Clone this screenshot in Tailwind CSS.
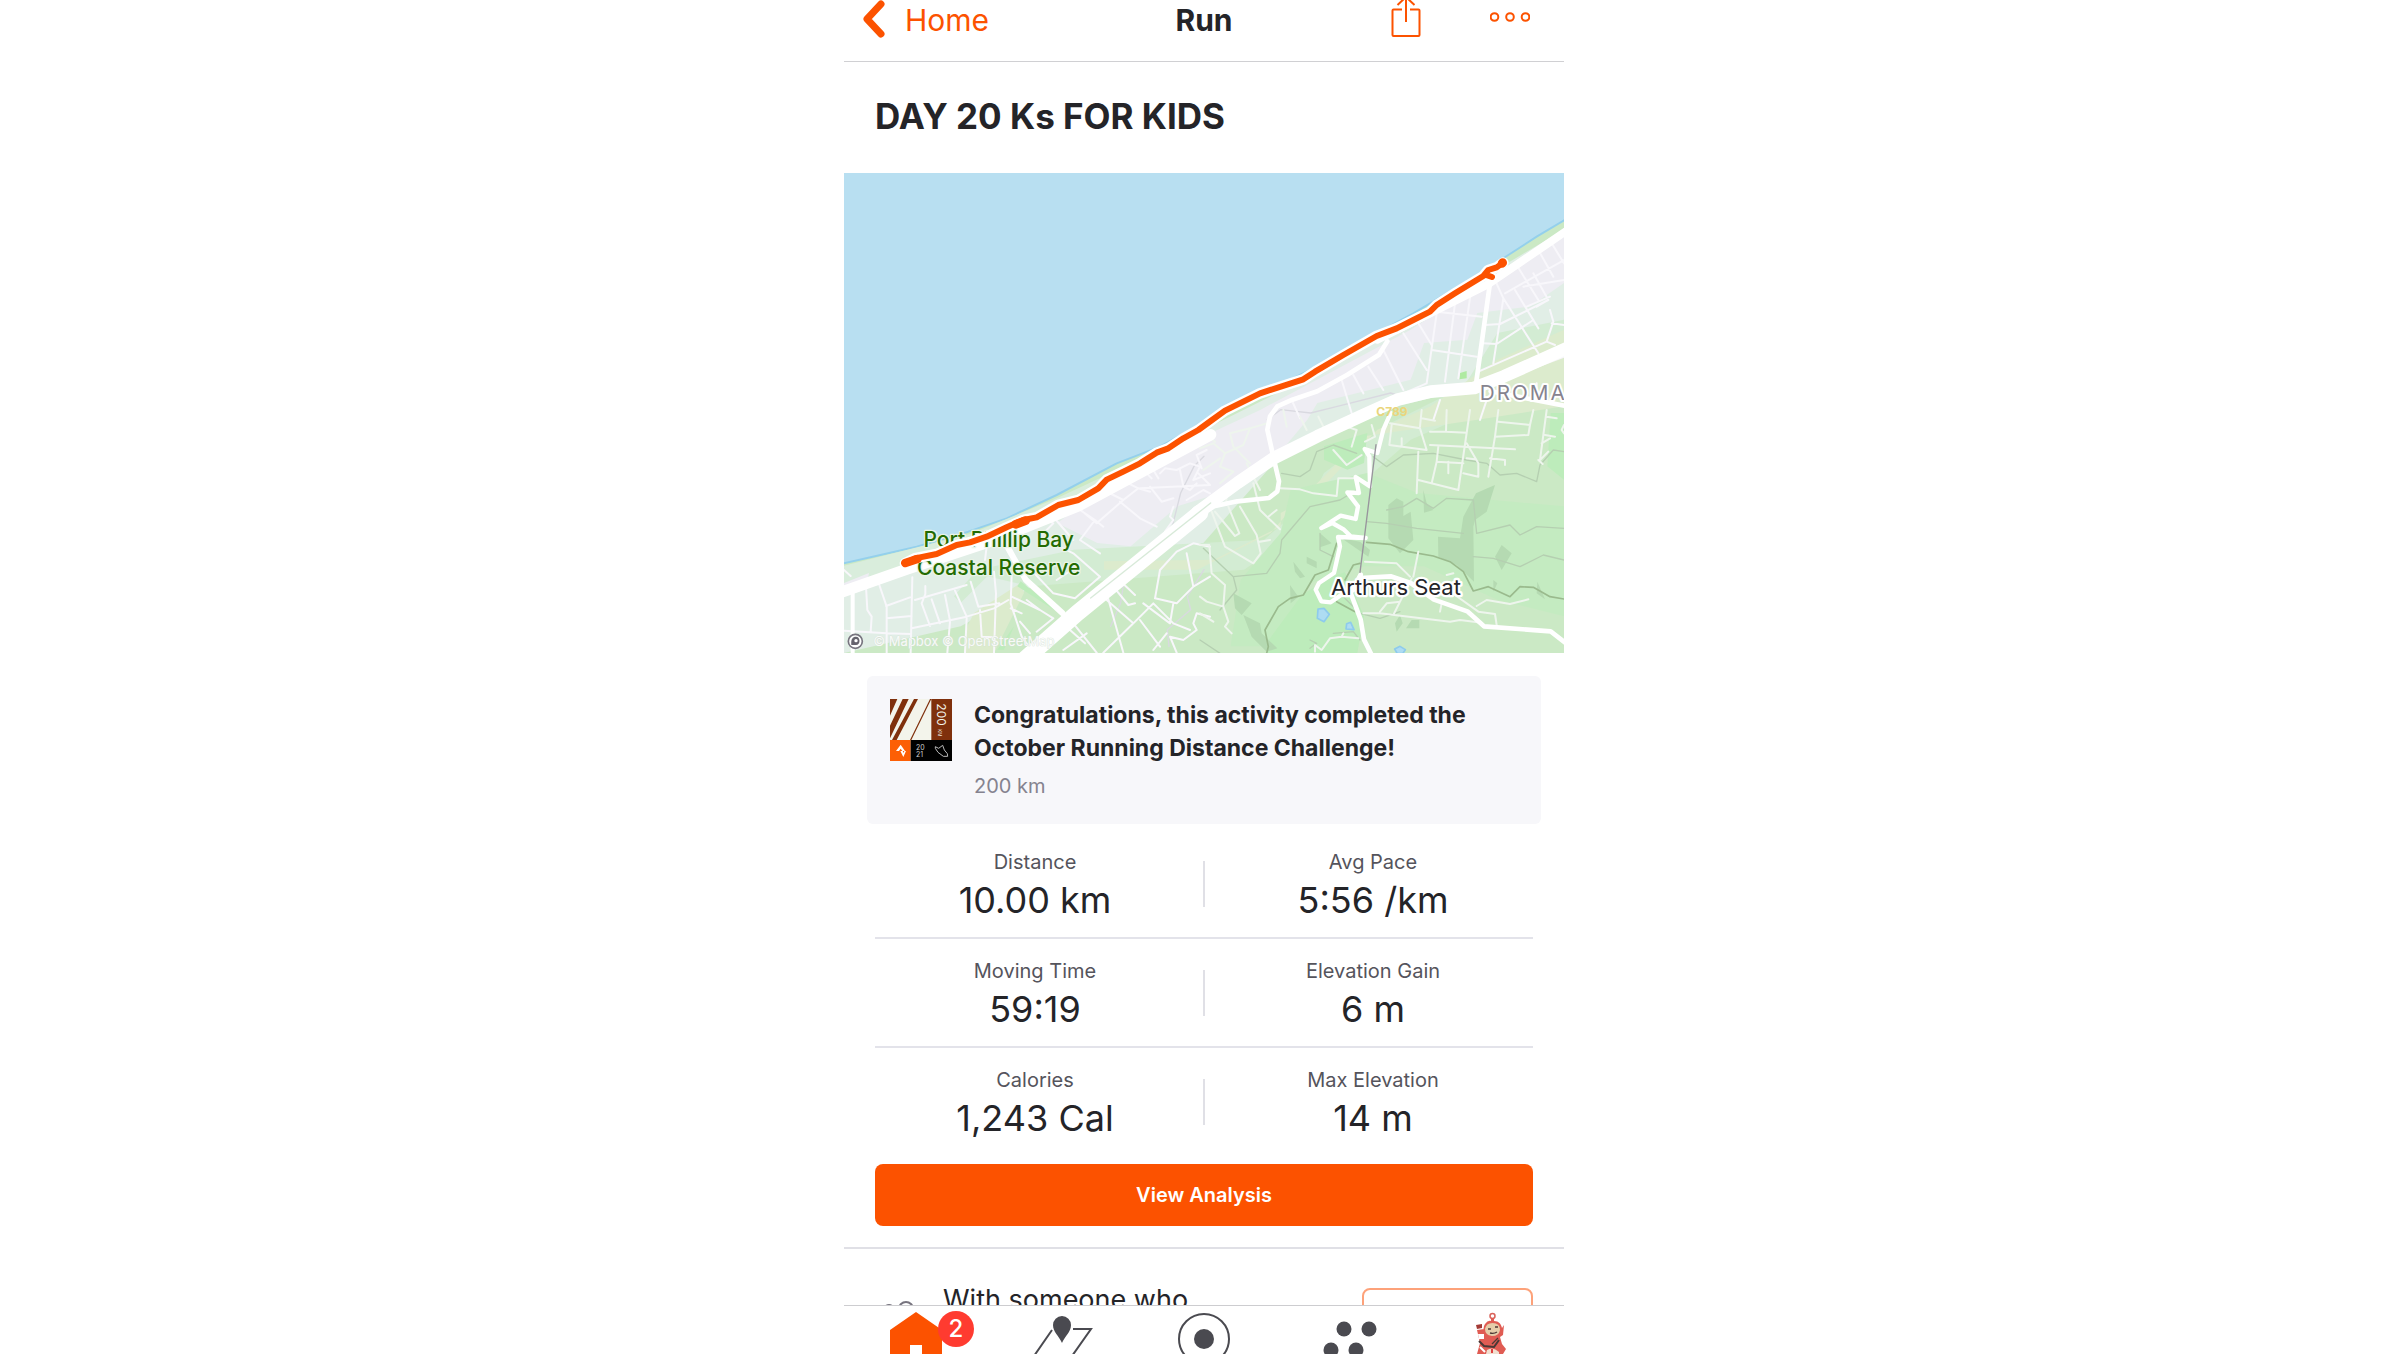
<!DOCTYPE html>
<html lang="en">
<head>
  <meta charset="UTF-8" />
  <meta name="viewport" content="width=device-width, initial-scale=1.0" />
  <title>Run</title>
  <script src="https://cdn.jsdelivr.net/npm/@tailwindcss/browser@4"></script>
</head>
<body class="bg-white text-[#242428] font-['Inter',sans-serif]">
  <div class="mx-auto flex h-screen w-full max-w-[720px] flex-col overflow-hidden">

    <header class="grid shrink-0 grid-cols-3 border-b border-[#d0d0d3] pb-[21px]">
      <a href="#" class="flex h-10 items-center gap-5 pl-[17px] text-[30px] text-[#fc5200]">
        <svg class="h-10 w-6" viewBox="0 0 24 40" fill="none" stroke="currentColor" stroke-width="7" stroke-linecap="round" stroke-linejoin="round"><path d="M20 4L6 19L20 34" /></svg>
        Home
      </a>
      <h1 class="flex h-10 items-center justify-center text-[30px] font-bold">Run</h1>
      <div class="flex h-10 items-center justify-end gap-[68px] pr-[34px] text-[#fc5200]">
        <button type="button" aria-label="Share">
          <svg class="h-10 w-8" viewBox="0 0 32 40" fill="none" stroke="currentColor" stroke-width="2"><path d="M12 9.500H3.500Q2.500 9.500 2.500 10.500V35Q2.500 36 3.500 36H28.500Q29.500 36 29.500 35V10.500Q29.500 9.500 28.500 9.500H20M16 22V-2M7.500 5L16-3L24.500 5" /></svg>
        </button>
        <button type="button" aria-label="More">
          <svg class="h-10 w-10" viewBox="0 0 40 40" fill="none" stroke="currentColor" stroke-width="2"><circle cx="4.500" cy="17" r="3.800" /><circle cx="20" cy="17" r="3.800" /><circle cx="35.500" cy="17" r="3.800" /></svg>
        </button>
      </div>
    </header>

    <main class="min-h-0 flex-1 overflow-hidden">
      <h2 class="px-[31px] pt-[34px] pb-[37px] text-[35px] leading-10 font-bold">DAY 20 Ks FOR KIDS</h2>

      <!-- map -->
      <svg class="block aspect-[3/2] w-full" viewBox="0 0 2160 1440" fill="none" stroke-linejoin="round" stroke-linecap="round" font-family="Inter, sans-serif">
        <rect width="2160" height="1440" fill="#b8dff1" />
        <path fill="#cbe9c5" stroke="#94d0ec" stroke-width="6" d="M-10 1173L218 1121L373 1076L488 1036L638 966L818 871L948 821L1100 738L1400 590L1600 480L1708 421L1868 326L1993 246L2078 191L2170 136V1450H-10Z" />
        <!-- ground tints -->
        <path fill="#e1eee6" d="M0 1200L430 1095L1100 760L1500 560L2160 170V440L1900 640L1500 740L1290 870L1060 1130L700 1160L480 1290L350 1360L0 1440Z" />
        <path fill="#d9eddc" d="M0 1178L380 1082L640 975L950 830L1100 760L640 1010L340 1130L0 1250Z" />
        <path fill="#d3ecd3" d="M690 1130L1260 1100L1400 980L1440 900L1640 750L1860 640L1960 480L2160 440V600L1700 800L1450 1020L1200 1190L560 1240L430 1210L350 1290L330 1270L400 1190Z" />
        <path fill="#dcebcd" d="M780 1165L1110 1160L1310 1060V1020L1420 960L1600 770L1760 700L1960 560L2160 470V700L1900 740L1560 790L1340 1010L1280 1080L1060 1190L780 1190ZM370 1360L390 1320L530 1230L540 1260L450 1440H360Z" />
        <path fill="#eeedf3" d="M640 1050L800 935L1100 780L1250 710L1700 470L1930 320L2160 180V330L2060 400L1900 420L1870 500L1740 510L1700 620L1420 690L1390 740L1290 860L1130 960L1000 1000L860 1120L760 1110Z" />
        <path fill="#eeedf3" d="M0 1230L75 1200L70 1225L0 1260Z" />
        <path fill="#bdecbb" d="M1440 820L1570 780L1560 870L1510 890L1440 860ZM1280 1320L1500 1190L1560 1330L1540 1440H1270ZM530 1225L660 1330L520 1240ZM460 1430L510 1360L480 1430ZM2120 720H2160V920L2110 880Z" />
        <path fill="#c4ebc1" d="M1340 950L1570 900L1720 960L2160 1000V1330L1960 1280L1740 1180L1560 1180L1400 1230L1260 1420L1160 1420L1190 1220L1310 1080Z" />
        <path fill="#afeaa2" d="M1848 600L1868 594V616L1846 619Z" />
        <!-- hill shading -->
        <g fill="#b5dab2" transform="translate(1068 711)">
          <path d="M590 265L610 275V318L632 305L640 390L600 430L565 385V285ZM670 240L680 280L700 300L672 308ZM862 235L885 225L860 305L825 330L820 350L822 515L770 465L715 440L714 380L780 385L790 320L828 250ZM905 405L935 430L905 480L885 440ZM425 385L480 395L510 420L505 440ZM280 455L315 500L300 505L285 485ZM360 370L395 400L360 412ZM100 550L155 580L125 615L105 595ZM130 615L180 640L185 670L232 715L200 725L155 680ZM270 525L295 560L272 580ZM585 640L600 615L608 640L590 665ZM635 630H658V655H618ZM880 510L892 520L880 545ZM1012 515L1035 568L1010 550ZM320 440L350 455L350 475L320 460Z" />
        </g>
        <!-- contour lines -->
        <g stroke="#b5cfb1" stroke-width="4" transform="translate(1068 711)">
          <path d="M245 190L300 200L330 180L350 125L400 105L470 130M520 140L560 170L610 135L700 130L800 150L860 160L900 195L950 190L1010 215L1020 165L1060 120L1092 125M10 415L100 500L200 490L240 430L245 390L330 290L420 270L470 240M560 300L610 290L650 265L700 295L740 265L820 270L830 370L930 345L960 375L1010 350L1092 355M500 335L560 340L650 355L790 370M820 440L880 445L960 470L1030 435L1092 450M360 370V420L400 440M100 500L110 540L60 600M0 690L60 730M430 560L480 610L540 625L600 605M330 690L350 700L330 715M400 670L460 665L480 690" />
        </g>
        <g stroke="#9aba8d" stroke-width="5" transform="translate(1068 711)">
          <path d="M200 730L205 710L195 660L235 590L270 565L310 555L345 495L385 480L410 400M435 510L460 465L480 460M500 397L570 403L625 425L700 438L750 455L790 485L820 543L865 530L930 560L960 530L1000 532L1050 560L1092 567M410 575L465 605" />
        </g>
        <path stroke="#d9d9e0" stroke-width="4" d="M1080 850L1050 880L1010 960L985 1060L970 1130M840 1225L830 1290L800 1360M1080 1190L1030 1270L1040 1310L970 1370L975 1420M1270 740L1310 710L1400 720L1480 700L1640 660L1700 680" />
        <!-- ponds -->
        <path fill="#aedcf2" stroke="#8ecbec" stroke-width="5" d="M1422 1308L1440 1306L1456 1324L1440 1346L1420 1336ZM1508 1352L1520 1348L1530 1370L1506 1368ZM1652 1428L1668 1420L1684 1430L1676 1442H1660Z" />

        <!-- west side streets -->
        <g stroke="#f8f7fb" stroke-width="6" transform="translate(-12 -9)">
          <path d="M12 1200L32 1218M78 1250L82 1320L95 1340L92 1385M118 1245L140 1310V1448M12 1382L140 1390L212 1392M140 1345L215 1338M138 1308L210 1282M217 1222L212 1448M256 1248V1272L245 1300L270 1368M215 1375L380 1340L462 1315L505 1290M275 1288L300 1360M315 1275L330 1352M345 1262L380 1340M392 1235L415 1310L478 1300M225 1290L380 1245M462 1205L468 1270L462 1448M330 1355L322 1448M380 1345L375 1448M420 1320L425 1400L462 1402M515 1215L512 1300L545 1400L580 1448M515 1280L600 1320L640 1345L590 1385M560 1290L600 1320M512 1315L545 1330M570 1390L540 1355M440 1130L435 1170M600 1100L640 1060L600 1040M600 1100L700 1150L780 1220L705 1285L640 1270L560 1185M635 1035L700 1110M650 1230L710 1190M690 1000L765 1050L720 1110L780 1150M710 1010L770 1060L850 990L790 960M765 1050L790 1070M840 995L900 1045L950 1070M825 920L895 955L850 990M900 955L1110 945L1075 910M895 955L930 965M930 950L965 995L1000 985M900 890L935 925M940 900L955 925M960 910L975 895L1010 900L1050 880L1080 890L1060 930L1110 910M1020 900L1030 950L1050 960L1070 940M1100 840L1070 855L1085 895M1040 990L1090 960L1110 970M1000 1010L990 1040L1000 1050L975 1085" />
          <path d="M800 1270L850 1448M820 1250L865 1305L885 1300M848 1240L885 1275M800 1290L880 1360L940 1300L1000 1360L1050 1380M945 1285L960 1200L1010 1145L1060 1120L1110 1130M945 1285L1010 1300L1060 1250L1110 1220M1040 1150L1060 1250M900 1350L960 1430M880 1360L790 1448M700 1360L770 1448M690 1380L735 1420M670 1440L740 1390M1000 1300L990 1360L910 1300M1110 1340L1070 1330L1060 1360L1070 1380L1030 1410L990 1400L1010 1448M980 1390L940 1440" />
        </g>
        <!-- north-east streets -->
        <g stroke="#f8f7fb" stroke-width="6" transform="translate(1068 -9)">
          <path d="M425 630L455 730M460 615L490 670M505 590L550 660M550 540L610 660M610 490L680 600M655 460L695 525M275 690L300 745M710 430L680 640L610 670M765 400L735 635M812 370L775 625M710 425L845 440M695 540L830 560M885 330L910 385L1015 550M910 385L880 580M950 285L1015 390M915 370L1092 270M1015 240L1060 320M1055 220L1092 280M1000 310L1045 390L1010 410M970 350L1092 330M945 360L1015 475M980 410L1050 380M855 465L900 462L1045 390M850 520L890 522L1000 450M835 605L1040 515L1065 525M1050 420L1060 455L1040 515M1055 460L1092 465M985 600L1092 560M1010 640V670M720 690L700 750M860 690L840 750" />
        </g>
        <!-- south-east streets -->
        <g stroke="#eef5ed" stroke-width="6" transform="translate(1068 711)">
          <path d="M0 115L40 100L75 130L60 170L100 185M10 180L60 145M75 130L130 105L150 55L90 70L100 110L150 160M150 55L200 40M250 0L260 50M300 20L320 60M355 20L370 50M45 95L15 75M100 185L60 220M140 160L180 240M240 235L300 238L340 250L410 258L415 205L460 205M35 305L75 410L160 460L182 430L170 375L120 290M45 305L105 378L118 370L85 290M80 255L78 285M160 220L180 300L240 358M205 320L230 300M180 395L210 390M0 405L28 405L35 490L75 525L70 590L20 575L0 560M70 590L85 635L75 650L95 670M0 610L40 635" />
          <path d="M570 40L660 55L680 120L568 105L575 45M605 85V108M665 0L660 50M665 25L705 32M740 0L738 65L800 68M690 65H740M810 0L775 240L655 210M655 125L650 250M715 110L710 155L695 220M710 155L790 160M745 155V190M690 105L945 118M800 100L835 160V200L790 190M895 0L885 80L865 200M895 35L990 45L985 75L885 80M1000 0L990 45M1040 0L1020 150L1045 125M1040 20L1070 25M1035 75L1065 80M1025 100L1050 85M1015 150L1028 162M870 145L915 150V165M800 145L825 148M1092 45L1085 60L1092 70M440 50L470 60L455 110M515 45L525 80L495 95M400 120L440 165L485 135" />
          <path d="M495 455L590 460L630 500M655 425L640 500M635 505L580 615M490 610H540L750 635L780 630L845 638M540 605L560 580L600 575M720 605L725 580M740 495L760 490M765 555L835 605L885 612L890 645M830 588L860 570L930 582L985 568M345 725V705L365 720L390 685L425 680L475 685M425 680L430 670" />
        </g>
        <!-- main roads -->
        <g stroke="#fff">
          <path stroke-width="34" d="M-20 1262L190 1188L430 1108L700 1000L1100 785" />
          <path stroke-width="12" d="M26 1250V1440" />
          <path stroke-width="18" d="M484 1110L545 1220L655 1320" />
          <path stroke-width="50" d="M530 1470L700 1320L1068 1020" />
          <path stroke-width="14" d="M700 1320L760 1255L1110 985" />
          <path stroke-width="38" d="M1060 1018L1180 930L1290 855L1420 790L1560 725L1660 680L1760 656L1890 645L1980 610L2180 520" />
          <path stroke-width="24" d="M1600 500L1930 335L2180 165" />
          <path stroke-width="14" d="M1630 505L1605 545L1510 605L1420 655L1345 680L1300 700L1278 730L1270 770L1290 860L1305 925L1300 955L1275 975L1180 985L1110 1000L1050 1040" />
          <path stroke-width="14" d="M1938 330L1895 640M1940 655L2170 700" />
          <path stroke-width="13" d="M1640 720L1618 770L1600 840L1562 828L1576 850L1578 940L1535 912L1545 960L1510 958L1542 1000L1535 1038L1490 1028L1432 1065L1465 1050L1500 1070L1520 1090L1565 1095L1482 1092L1488 1120L1470 1200L1425 1230L1415 1250L1432 1285L1460 1288L1500 1260L1530 1250" />
          <path stroke-width="14" d="M1550 1205L1520 1260L1550 1340L1560 1400L1585 1450M1550 1215L1640 1210L1700 1230L1770 1280L1870 1315L1920 1360L2080 1372L2120 1375L2165 1410" />
        </g>
        <path stroke="#98949d" stroke-width="4" d="M1596 815L1548 1198" />
        <path stroke="#d8ead9" stroke-width="4" d="M740 1275L1100 990" />

        <g paint-order="stroke">
          <g font-size="63" font-weight="500" fill="#246b02" stroke="#e9f4e6" stroke-width="8">
            <text x="464" y="1122" text-anchor="middle">Port Phillip Bay</text>
            <text x="464" y="1205" text-anchor="middle">Coastal Reserve</text>
          </g>
          <text x="1656" y="1267" text-anchor="middle" font-size="66" fill="#242428" stroke="#fff" stroke-width="14">Arthurs Seat</text>
          <text x="1907" y="680" class="tracking-widest" font-size="62" fill="#86838f" stroke="#fff" stroke-width="12">DROMANA</text>
          <text x="1644" y="728" text-anchor="middle" font-size="36" font-weight="700" fill="#ead57c">C789</text>
        </g>

        <!-- run route -->
        <g stroke="#fff" stroke-width="32">
          <path id="route" d="M183 1171L213 1156L278 1143L338 1116L378 1108L428 1091L488 1063L538 1041L578 1033L643 996L703 981L763 946L788 920L838 896L888 871L938 839L973 826L1018 796L1063 771L1100 744L1143 713L1248 661L1378 619L1413 596L1498 546L1598 489L1658 466L1708 441L1758 416L1778 396L1833 361L1918 309L1933 291L1958 283L1978 269M1922 304L1944 312" />
        </g>
        <g stroke="#fc5200">
          <use href="#route" stroke-width="18" />
          <path stroke-width="26" d="M184 1170L220 1158M515 1054L545 1043M1974 271L1976 269" />
        </g>

        <circle cx="34" cy="1405" r="21" fill="#fff" stroke="#77747f" stroke-width="5" />
        <path fill="#66636e" d="M22 1416C20 1398 26 1391 36 1391C50 1391 50 1416 36 1416Z" />
        <circle cx="36" cy="1403" r="5" fill="#fff" />
        <text x="88" y="1419" font-size="39" fill="#f7faf7" stroke="#d5dfd6" stroke-width="2" paint-order="stroke">© Mapbox © OpenStreetMap</text>
      </svg>

      <section class="mx-[23px] mt-[23px] flex gap-[22px] rounded-md bg-[#f7f7fa] px-[23px] pt-[23px] pb-6">
        <svg class="size-[62px] shrink-0" viewBox="0 0 186 186" font-family="Inter, sans-serif">
          <rect width="186" height="186" fill="#f3f4eb" />
          <path fill="#7f300c" d="M0 0H22L0 50ZM38 0H56L0 118V80ZM72 0H84L20 123H6ZM120 0H124L64 123H60ZM124 0H186V123H124Z" />
          <path fill="#fc5f05" d="M0 123H62V186H0Z" />
          <path fill="#000" d="M62 123H186V186H62Z" />
          <path fill="#fff" d="M18 156L32 137L45 156H37L32 149L27 156ZM31 156H38L41 162L43 156H48L40 174Z" />
          <path fill="none" stroke="#bbb" stroke-width="3" d="M136 143L146 148L158 139L163 153L172 164L173 172H160L144 160L136 148Z" />
          <text transform="translate(142 13) rotate(90)" font-size="36" fill="#f3f4eb">200</text>
          <text transform="translate(144 90) rotate(90)" font-size="14" fill="#f3f4eb">KM</text>
          <text x="78" y="153" font-size="21" fill="#ccc">20</text>
          <text x="78" y="173" font-size="21" fill="#ccc">21</text>
        </svg>
        <div>
          <h3 class="text-[23px] leading-[33px] font-bold">Congratulations, this activity completed the<br />October Running Distance Challenge!</h3>
          <p class="mt-[7px] text-[20px] leading-7 text-[#85838f]">200 km</p>
        </div>
      </section>

      <div class="mx-[23px] mt-1.5 text-center">
        <div class="flex items-center pt-[18px] pb-[17px]">
          <div class="flex-1"><p class="text-[20px] leading-7 text-[#55545c]">Distance</p><p class="mt-1 text-[36px] leading-10">10.00 km</p></div>
          <div class="h-[46px] w-0.5 bg-[#e0e0e6]"></div>
          <div class="flex-1"><p class="text-[20px] leading-7 text-[#55545c]">Avg Pace</p><p class="mt-1 text-[36px] leading-10">5:56 /km</p></div>
        </div>
        <hr class="mx-2 border-t-2 border-[#e3e3ea]" />
        <div class="flex items-center pt-[18px] pb-[17px]">
          <div class="flex-1"><p class="text-[20px] leading-7 text-[#55545c]">Moving Time</p><p class="mt-1 text-[36px] leading-10">59:19</p></div>
          <div class="h-[46px] w-0.5 bg-[#e0e0e6]"></div>
          <div class="flex-1"><p class="text-[20px] leading-7 text-[#55545c]">Elevation Gain</p><p class="mt-1 text-[36px] leading-10">6 m</p></div>
        </div>
        <hr class="mx-2 border-t-2 border-[#e3e3ea]" />
        <div class="flex items-center pt-[18px] pb-[17px]">
          <div class="flex-1"><p class="text-[20px] leading-7 text-[#55545c]">Calories</p><p class="mt-1 text-[36px] leading-10">1,243 Cal</p></div>
          <div class="h-[46px] w-0.5 bg-[#e0e0e6]"></div>
          <div class="flex-1"><p class="text-[20px] leading-7 text-[#55545c]">Max Elevation</p><p class="mt-1 text-[36px] leading-10">14 m</p></div>
        </div>
      </div>

      <div class="mt-[9px] px-[31px]">
        <button type="button" class="h-[62px] w-full rounded-lg bg-[#fc5200] text-[20px] font-semibold text-white">View Analysis</button>
      </div>

      <div class="mt-[21px] flex items-start border-t-2 border-[#e0e0e6] px-[31px] pt-[33px]">
        <svg class="mt-3.5 h-10 w-[68px] shrink-0" viewBox="0 0 68 40" fill="none" stroke="#77747f" stroke-width="2"><circle cx="31" cy="13" r="7" /><circle cx="14" cy="14" r="5" /></svg>
        <p class="flex-1 text-[27px] leading-9">With someone who</p>
        <button type="button" aria-label="Add others" class="mt-1.5 h-14 w-[171px] rounded-lg border-2 border-[#fda27a]"></button>
      </div>
    </main>

    <nav class="grid h-[49px] shrink-0 grid-cols-5 overflow-hidden border-t border-[#cdcdd0] bg-white text-[#4a4a50]">
      <a href="#" aria-label="Home" class="relative flex justify-center">
        <svg class="h-12 w-36" viewBox="0 0 144 48" fill="#fc5200"><path d="M46 24L72 6L98 24V48H78V39H66V48H46Z" /></svg>
        <span class="absolute top-[5px] left-1/2 ml-[22px] flex size-9 items-center justify-center rounded-full bg-[#ff3b30] text-[24px] leading-6 font-medium text-white">2</span>
      </a>
      <a href="#" aria-label="Maps" class="flex justify-center">
        <svg class="h-12 w-36" viewBox="0 0 144 48" fill="none" stroke="currentColor" stroke-width="2"><path d="M64 24L46 50M85 23H103L84 50" /><path fill="currentColor" stroke="none" d="M74 37C71 30 65 26 65 19A9 9 0 0 1 83 19C83 26 77 30 74 37Z" /></svg>
      </a>
      <a href="#" aria-label="Record" class="flex justify-center">
        <svg class="h-12 w-36" viewBox="0 0 144 48"><circle cx="72" cy="33" r="25" fill="none" stroke="currentColor" stroke-width="2" /><circle cx="72" cy="33" r="10" fill="currentColor" /></svg>
      </a>
      <a href="#" aria-label="Groups" class="flex justify-center">
        <svg class="h-12 w-36" viewBox="0 0 144 48" fill="currentColor"><circle cx="68" cy="23" r="7.500" /><circle cx="93" cy="23" r="7.500" /><circle cx="55" cy="44" r="7.500" /><circle cx="80" cy="44" r="7.500" /></svg>
      </a>
      <a href="#" aria-label="You" class="flex justify-center">
        <svg class="h-12 w-36" viewBox="0 0 144 48">
          <circle cx="72.500" cy="10" r="2.500" fill="none" stroke="#d9625a" stroke-width="1.500" />
          <path fill="#e05c53" d="M71 12H74V15C79 15 81 18 82 22L84 19L83 29L80 31L82 38L86 43L83 48H57L60 37L57 24L64 23L65 30Q62 22 65 18Q68 14 71 15Z" />
          <path fill="#e5cda9" d="M72.500 17Q80 17 80 24Q79 30 72 30Q65 29 65 23Q66 17 72.500 17Z" />
          <path stroke="#4b3934" stroke-width="1.300" fill="none" d="M68 23L71 23M75 21L78 21M70 27Q74 28 77 26M72 38L78 32" />
          <path fill="#fff" d="M58 28L64 28L64 33L59 33Z" />
          <path fill="#a33a35" d="M56 19L62 18L62 22L57 23Z" />
          <path stroke="#493836" stroke-width="2" fill="none" d="M59 35L64 40L74 41L79 34" />
          <path fill="#f0dfd0" d="M67 44Q73 40 79 46V48H66Z" />
          <path fill="#e04040" d="M71 43H73V47H71Z" />
          <path stroke="#fff" stroke-width="2" d="M60 41L65 46" />
        </svg>
      </a>
    </nav>
  </div>
</body>
</html>
